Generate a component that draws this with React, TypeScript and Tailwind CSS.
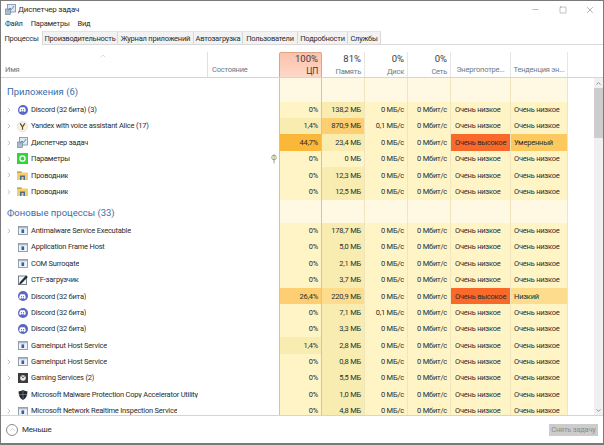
import { FaDiscord } from 'react-icons/fa';
import { ChevronRight, ChevronUp, ChevronDown, Minus, Square, X } from 'lucide-react';

const tabs = [
  { label: 'Процессы', w: 'w-[42px]' },
  { label: 'Производительность', w: 'w-[75px]' },
  { label: 'Журнал приложений', w: 'w-[76px]' },
  { label: 'Автозагрузка', w: 'w-[49px]' },
  { label: 'Пользователи', w: 'w-[55px]' },
  { label: 'Подробности', w: 'w-[50px]' },
  { label: 'Службы', w: 'w-[33px]' },
];

type Heat = 0 | 1 | 2 | 3 | 4;
type Row = {
  name: string;
  icon: string;
  open?: boolean;
  cpu: [string, Heat];
  mem: [string, Heat];
  disk?: string;
  hot?: boolean;
  trend?: string;
  pin?: boolean;
};

const apps: Row[] = [
  { name: 'Discord (32 бита) (3)', icon: 'discord', open: true, cpu: ['0%', 0], mem: ['138,2 МБ', 1] },
  { name: 'Yandex with voice assistant Alice (17)', icon: 'yandex', open: true, cpu: ['1,4%', 1], mem: ['870,9 МБ', 3], disk: '0,1 МБ/с' },
  { name: 'Диспетчер задач', icon: 'taskmgr', open: true, cpu: ['44,7%', 4], mem: ['23,4 МБ', 1], hot: true, trend: 'Умеренный' },
  { name: 'Параметры', icon: 'settings', open: true, cpu: ['0%', 0], mem: ['0 МБ', 0], pin: true },
  { name: 'Проводник', icon: 'folder', open: true, cpu: ['0%', 0], mem: ['12,3 МБ', 1] },
  { name: 'Проводник', icon: 'folder', open: true, cpu: ['0%', 0], mem: ['12,5 МБ', 1] },
];

const background: Row[] = [
  { name: 'Antimalware Service Executable', icon: 'window', open: true, cpu: ['0%', 0], mem: ['178,7 МБ', 1] },
  { name: 'Application Frame Host', icon: 'window', cpu: ['0%', 0], mem: ['5,0 МБ', 1] },
  { name: 'COM Surrogate', icon: 'window', cpu: ['0%', 0], mem: ['2,1 МБ', 1] },
  { name: 'CTF-загрузчик', icon: 'pen', cpu: ['0%', 0], mem: ['3,7 МБ', 1] },
  { name: 'Discord (32 бита)', icon: 'discord', cpu: ['26,4%', 3], mem: ['220,9 МБ', 2], hot: true, trend: 'Низкий' },
  { name: 'Discord (32 бита)', icon: 'discord', cpu: ['0%', 0], mem: ['7,1 МБ', 1], disk: '0,1 МБ/с' },
  { name: 'Discord (32 бита)', icon: 'discord', cpu: ['0%', 0], mem: ['3,3 МБ', 1] },
  { name: 'GameInput Host Service', icon: 'window', cpu: ['1,4%', 1], mem: ['2,8 МБ', 1] },
  { name: 'GameInput Host Service', icon: 'window', open: true, cpu: ['0%', 0], mem: ['0,8 МБ', 1] },
  { name: 'Gaming Services (2)', icon: 'gaming', open: true, cpu: ['0%', 0], mem: ['5,5 МБ', 1] },
  { name: 'Microsoft Malware Protection Copy Accelerator Utility', icon: 'shield', cpu: ['0%', 0], mem: ['1,0 МБ', 1] },
  { name: 'Microsoft Network Realtime Inspection Service', icon: 'window', open: true, cpu: ['0%', 0], mem: ['4,8 МБ', 1] },
];

const heatClass: Record<Heat, string> = {
  0: 'bg-[#fff4c6]',
  1: 'bg-[#f9ecb0]',
  2: 'bg-[#fddc8e]',
  3: 'bg-[#fdcf72]',
  4: 'bg-[#fbb838]',
};

const columns = 'grid grid-cols-[207px_71px_43px_43px_43px_43px_60px_57px]';

function RowIcon({ type }: { type: string }) {
  if (type === 'discord') {
    return (
      <span className="flex h-[10px] w-[10px] items-center justify-center rounded-full bg-[#5865c9] text-white">
        <FaDiscord size={7} />
      </span>
    );
  }
  if (type === 'yandex') {
    return (
      <svg width="11" height="11" viewBox="0 0 11 11">
        <circle cx="5.5" cy="5.5" r="5.2" fill="#f3f1ea" stroke="#d8d6cf" strokeWidth="0.5" />
        <path d="M3.2 2.4 5.5 6v2.8M7.8 2.4 5.5 6" fill="none" stroke="#6b4a1c" strokeWidth="1.2" />
      </svg>
    );
  }
  if (type === 'taskmgr') {
    return (
      <svg width="11" height="11" viewBox="0 0 11 11">
        <rect x="2.5" y="0.5" width="8" height="7.5" fill="#dfe8f0" stroke="#7c8c9c" strokeWidth="0.8" />
        <rect x="0.5" y="5" width="5" height="5.5" fill="#a9bdd0" stroke="#6c7c8c" strokeWidth="0.6" />
        <path d="M3 6.5 5 4l1.5 1.5L9 2" fill="none" stroke="#4c86b8" strokeWidth="0.9" />
      </svg>
    );
  }
  if (type === 'settings') {
    return (
      <svg width="11" height="11" viewBox="0 0 11 11">
        <rect width="11" height="11" fill="#32d43c" />
        <circle cx="5.5" cy="5.5" r="2.6" fill="none" stroke="#e6fbe6" strokeWidth="1.5" />
      </svg>
    );
  }
  if (type === 'folder') {
    return (
      <svg width="11" height="11" viewBox="0 0 11 11">
        <path d="M0 1.5h4.5l1 1H11V10H0z" fill="#f2cf6b" />
        <rect x="0" y="1.5" width="4.5" height="1.5" fill="#c9a24a" />
        <path d="M3 10V5.5h5V10H6.5V7h-2v3z" fill="#4a6f96" />
      </svg>
    );
  }
  if (type === 'window') {
    return (
      <svg width="10" height="9" viewBox="0 0 10 9">
        <rect x="0.4" y="0.4" width="9.2" height="8.2" fill="#eef2f6" stroke="#7f8c99" strokeWidth="0.8" />
        <rect x="1" y="1" width="8" height="1.3" fill="#a9b7c6" />
        <rect x="3.5" y="3.4" width="2.6" height="3.6" fill="#2f62a8" />
      </svg>
    );
  }
  if (type === 'pen') {
    return (
      <svg width="10" height="10" viewBox="0 0 10 10">
        <rect x="0.4" y="1" width="8" height="8.6" fill="#f4f6f8" stroke="#59646e" strokeWidth="0.8" />
        <path d="M1 9.5 2 7l6-6.5L9.8 2 3.5 8.5z" fill="#1c2a3a" />
      </svg>
    );
  }
  if (type === 'gaming') {
    return (
      <svg width="10" height="10" viewBox="0 0 10 10">
        <rect width="10" height="10" fill="#3c3c3c" />
        <circle cx="5" cy="5" r="2.8" fill="#e8e8e8" />
        <path d="M3.5 3.2 5 5l1.5-1.8" fill="none" stroke="#3c3c3c" strokeWidth="0.8" />
      </svg>
    );
  }
  return (
    <svg width="10" height="10" viewBox="0 0 10 10">
      <path d="M5 0c1.5 1 3 1.2 4.4 1.2 0 4-1 6.8-4.4 8.8C1.6 8 .6 5.2.6 1.2 2 1.2 3.5 1 5 0z" fill="#23272b" />
      <path d="M.8 4.5h8.400M5 0v10" stroke="#8c949c" strokeWidth="0.6" />
    </svg>
  );
}

function DataCell({ text, bg, extra }: { text: string; bg: string; extra?: string }) {
  return (
    <div className={`flex items-center justify-end whitespace-nowrap border-r border-[#f1e6bb] pr-[3px] ${bg} ${extra ?? ''}`}>
      {text}
    </div>
  );
}

function ProcessRow({ row }: { row: Row }) {
  return (
    <div className={`${columns} h-[16.4px] leading-none text-[#2c2c2c]`}>
      <div className="flex items-center overflow-hidden">
        <span className="flex w-[15px] shrink-0 justify-center text-[#8a8a8a]">
          {row.open && <ChevronRight size={8} strokeWidth={1.5} />}
        </span>
        <span className="flex w-[13px] shrink-0 justify-center"><RowIcon type={row.icon} /></span>
        <span className="truncate pl-[2px]">{row.name}</span>
      </div>
      <div className="flex items-center justify-end pr-[2px]">
        {row.pin && (
          <svg width="6" height="10" viewBox="0 0 6 10" fill="none" stroke="#84935a" strokeWidth="0.8">
            <circle cx="3" cy="3.5" r="2.3" />
            <path d="M3 .5V9.5" />
          </svg>
        )}
      </div>
      <DataCell text={row.cpu[0]} bg={heatClass[row.cpu[1]]} extra="border-l border-l-[#e0c09a] border-r-[#d8c49a]" />
      <DataCell text={row.mem[0]} bg={heatClass[row.mem[1]]} />
      <DataCell text={row.disk ?? '0 МБ/с'} bg={heatClass[0]} />
      <DataCell text="0 Мбит/с" bg={heatClass[0]} />
      <div className={`flex items-center whitespace-nowrap border-r border-[#f1e6bb] pl-[4px] ${row.hot ? 'bg-[#f9692a]' : heatClass[0]}`}>
        {row.hot ? 'Очень высокое' : 'Очень низкое'}
      </div>
      <div className={`flex items-center whitespace-nowrap border-r border-[#f1e6bb] pl-[3px] ${row.trend === 'Умеренный' ? 'bg-[#fdc95f]' : row.trend === 'Низкий' ? 'bg-[#fddc8e]' : heatClass[0]}`}>
        {row.trend ?? 'Очень низкое'}
      </div>
    </div>
  );
}

function GroupRow({ title, h }: { title: string; h: string }) {
  return (
    <div className={`${columns} ${h}`}>
      <div className="flex items-center pl-[6px] pt-[3px] text-[9.5px] leading-none tracking-normal text-[#3a6ea8]">{title}</div>
      <div />
      <div className="border-x border-l-[#e0c09a] border-r-[#d8c49a] bg-[#fff8e3]" />
      <div className="border-r border-[#f1e6bb] bg-[#fff8e3]" />
      <div className="border-r border-[#f1e6bb] bg-[#fff8e3]" />
      <div className="border-r border-[#f1e6bb] bg-[#fff8e3]" />
      <div className="border-r border-[#f1e6bb] bg-[#fff8e3]" />
      <div className="border-r border-[#f1e6bb] bg-[#fff8e3]" />
    </div>
  );
}

function HeaderCell({ top, label }: { top: string; label: string }) {
  return (
    <div className="flex flex-col items-end border-r border-[#e6e6e6] pr-[3px]">
      <span className="text-[9.5px] leading-[13px] tracking-normal text-[#3c3c3c]">{top}</span>
      <span className="mt-[1px] text-[7.5px] leading-[11px] text-[#6a7a8c]">{label}</span>
    </div>
  );
}

export default function App() {
  return (
    <div className="flex h-[445px] w-[604px] flex-col overflow-hidden border-x border-t border-b-2 border-[#7a7a7a] bg-white font-['Roboto','Liberation_Sans',sans-serif] text-[7.5px] tracking-[-0.22px] text-[#2c2c2c]">
      {/* Title bar */}
      <div className="flex h-[17px] shrink-0 items-center">
        <span className="ml-[4px] mr-[2px] flex"><RowIcon type="taskmgr" /></span>
        <span className="text-[8px] leading-none">Диспетчер задач</span>
        <div className="ml-auto flex items-center text-[#444]">
          <span className="flex w-[27px] justify-center"><Minus size={9} strokeWidth={1} /></span>
          <span className="flex w-[27px] justify-center"><Square size={8} strokeWidth={1} /></span>
          <span className="flex w-[27px] justify-center"><X size={10} strokeWidth={1} /></span>
        </div>
      </div>

      {/* Menu */}
      <div className="flex h-[12px] shrink-0 items-center gap-[8px] pl-[4px] leading-none">
        <span>Файл</span>
        <span>Параметры</span>
        <span>Вид</span>
      </div>

      {/* Tabs */}
      <div className="mt-[1px] flex h-[14px] shrink-0 items-end">
        {tabs.map((tab, i) => (
          <div
            key={tab.label}
            className={`flex h-[14px] items-center justify-center whitespace-nowrap border-r border-[#d9d9d9] pt-[2px] leading-none ${tab.w} ${i === 0 ? 'bg-white' : 'border-y border-y-[#e4e4e4] border-b-[#d9d9d9] bg-[#f2f2f2]'}`}
          >
            {tab.label}
          </div>
        ))}
        <div className="h-[14px] flex-1 border-b border-[#d9d9d9]" />
      </div>

      {/* Column headers */}
      <div className={`${columns} h-[33px] shrink-0 border-b border-[#d5d5d5] pt-[7px]`}>
        <div className="relative flex items-end border-r border-[#e0e0e0] pb-[2px] pl-[4px] text-[#6a7a8c]">
          <ChevronUp size={8} strokeWidth={1} className="absolute left-[98px] top-0 text-[#999]" />
          Имя
        </div>
        <div className="flex items-end pb-[2px] pl-[4px] text-[#6a7a8c]">Состояние</div>
        <div className="flex flex-col items-end rounded-t-[2px] border border-b-0 border-[#dba683] bg-gradient-to-b from-[#fdc1ac] to-[#fdd8c8] pr-[3px]">
          <span className="text-[9.5px] leading-[12px] tracking-normal text-[#3c3c3c]">100%</span>
          <span className="mt-[1px] text-[8.5px] leading-[11px] text-[#3c3c3c]">ЦП</span>
        </div>
        <HeaderCell top="81%" label="Память" />
        <HeaderCell top="0%" label="Диск" />
        <HeaderCell top="0%" label="Сеть" />
        <div className="flex items-end justify-center whitespace-nowrap border-r border-[#e6e6e6] pb-[2px] text-[#6a7a8c]">Энергопотре...</div>
        <div className="flex items-end justify-center whitespace-nowrap border-r border-[#e6e6e6] pb-[2px] text-[#6a7a8c]">Тенденция эн...</div>
      </div>

      {/* Table with scrollbar */}
      <div className="flex h-[337px] shrink-0 overflow-hidden">
        <div className="min-w-0 flex-1">
          <GroupRow title="Приложения (6)" h="h-[23.6px]" />
          {apps.map((row, i) => <ProcessRow key={i} row={row} />)}
          <GroupRow title="Фоновые процессы (33)" h="h-[22.6px]" />
          {background.map((row, i) => <ProcessRow key={i} row={row} />)}
        </div>
        <div className="flex w-[9px] shrink-0 flex-col bg-[#f0f0f0] text-[#555]">
          <span className="flex h-[10px] items-center justify-center"><ChevronUp size={7} strokeWidth={2} /></span>
          <div className="h-[50px] bg-[#cdcdcd]" />
          <span className="mt-auto flex h-[10px] items-center justify-center"><ChevronDown size={7} strokeWidth={2} /></span>
        </div>
      </div>

      {/* Footer */}
      <div className="flex flex-1 items-center border-t border-[#d5d5d5] bg-white pl-[5px] pr-[5px]">
        <span className="flex h-[12px] w-[12px] items-center justify-center rounded-full border border-[#8a8a8a] text-[#777]">
          <ChevronUp size={9} strokeWidth={1} />
        </span>
        <span className="ml-[4px] text-[8px] leading-none">Меньше</span>
        <div className="ml-auto flex h-[12px] w-[49px] items-center justify-center whitespace-nowrap bg-[#cccccc] leading-none text-[#8c8c8c]">
          Снять задачу
        </div>
      </div>
    </div>
  );
}
